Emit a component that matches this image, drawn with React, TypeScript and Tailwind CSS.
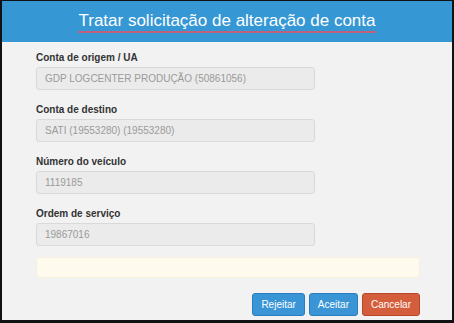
import React from 'react'

const fields = [
  { label: 'Conta de origem / UA', value: 'GDP LOGCENTER PRODUÇÃO (50861056)' },
  { label: 'Conta de destino', value: 'SATI (19553280) (19553280)' },
  { label: 'Número do veículo', value: '1119185' },
  { label: 'Ordem de serviço', value: '19867016' },
]

function Field({ label, value }: { label: string; value: string }) {
  return (
    <div className="flex flex-col">
      <label className="text-[10px] leading-[14px] font-bold text-[#333333]">{label}</label>
      <div className="mt-[2px] flex h-[23px] w-[279px] items-center rounded-[3px] border border-[#d9d9d9] bg-[#ebebeb] pl-[8px] text-[10px] text-[#9a9a9a]">
        {value}
      </div>
    </div>
  )
}

export default function App() {
  return (
    <div
      className="flex h-[323px] w-[454px] flex-col border-t border-r-2 border-b-[3px] border-l-2 border-[#111111] bg-[#f2f2f2]"
      style={{ fontFamily: '"Liberation Sans", Arial, sans-serif' }}
    >
      <div className="flex h-[41px] shrink-0 items-center justify-center bg-[#3597d4]">
        <span className="inline-block border-b-2 border-[#c0607a] text-[17px] leading-[20px] text-white">
          Tratar solicitação de alteração de conta
        </span>
      </div>

      <div className="flex flex-1 flex-col pt-[9px] pr-[32px] pl-[34px]">
        <div className="flex flex-col gap-[13px]">
          {fields.map((f) => (
            <Field key={f.label} label={f.label} value={f.value} />
          ))}
        </div>

        <div className="mt-[11px] h-[21px] rounded-[3px] border border-[#f6f1dc] bg-[#fefbee]" />

        <div className="mt-[15px] flex justify-end gap-[4px]">
          <button className="h-[23px] rounded-[3px] border border-[#2a7ebd] bg-[#3a95d7] px-2 text-[10px] text-white">
            Rejeitar
          </button>
          <button className="h-[23px] rounded-[3px] border border-[#2a7ebd] bg-[#3a95d7] px-2 text-[10px] text-white">
            Aceitar
          </button>
          <button className="h-[23px] rounded-[3px] border border-[#b8482c] bg-[#d45d3c] px-2 text-[10px] text-white">
            Cancelar
          </button>
        </div>
      </div>
    </div>
  )
}
